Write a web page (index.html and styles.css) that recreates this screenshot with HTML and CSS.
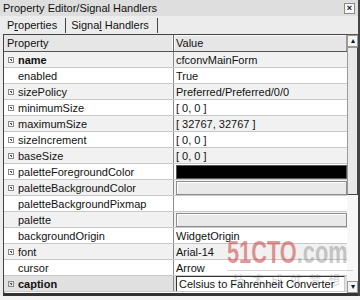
FILE: index.html
```html
<!DOCTYPE html>
<html>
<head>
<meta charset="utf-8">
<link rel="stylesheet" href="styles.css">
</head>
<body>
<div class="window">
  <div class="titlebar">
    <span class="title">Property Editor/Signal Handlers</span>
    <span class="close">×</span>
  </div>
  <div class="tabs">
    <span class="tab">P<u>r</u>operties</span>
    <span class="tab">Signa<u>l</u> Handlers</span>
  </div>
  <div class="body">
    <div class="table">
      <div class="row head"><div class="c1">Property</div><div class="c2">Value</div></div>
      <div class="row alt"><div class="c1"><i class="exp"></i><b>name</b></div><div class="c2">cfconvMainForm</div></div>
      <div class="row"><div class="c1"><i class="noexp"></i>enabled</div><div class="c2">True</div></div>
      <div class="row alt"><div class="c1"><i class="exp"></i>sizePolicy</div><div class="c2">Preferred/Preferred/0/0</div></div>
      <div class="row"><div class="c1"><i class="exp"></i>minimumSize</div><div class="c2">[ 0, 0 ]</div></div>
      <div class="row alt"><div class="c1"><i class="exp"></i>maximumSize</div><div class="c2">[ 32767, 32767 ]</div></div>
      <div class="row"><div class="c1"><i class="exp"></i>sizeIncrement</div><div class="c2">[ 0, 0 ]</div></div>
      <div class="row alt"><div class="c1"><i class="exp"></i>baseSize</div><div class="c2">[ 0, 0 ]</div></div>
      <div class="row"><div class="c1"><i class="exp"></i>paletteForegroundColor</div><div class="c2"><span class="swatch black"></span></div></div>
      <div class="row alt"><div class="c1"><i class="exp"></i>paletteBackgroundColor</div><div class="c2"><span class="swatch"></span></div></div>
      <div class="row"><div class="c1"><i class="noexp"></i>paletteBackgroundPixmap</div><div class="c2"></div></div>
      <div class="row alt"><div class="c1"><i class="noexp"></i>palette</div><div class="c2"><span class="swatch"></span></div></div>
      <div class="row"><div class="c1"><i class="noexp"></i>backgroundOrigin</div><div class="c2">WidgetOrigin</div></div>
      <div class="row alt"><div class="c1"><i class="exp"></i>font</div><div class="c2">Arial-14</div></div>
      <div class="row"><div class="c1"><i class="noexp"></i>cursor</div><div class="c2">Arrow</div></div>
      <div class="row sel"><div class="c1"><i class="exp"></i><b>caption</b></div><div class="c2"><span class="edit">Celsius to Fahrenheit Converter</span></div></div>
    </div>
    <div class="scrollbar">
      <div class="arrow">▴</div>
      <div class="thumb"></div>
      <div class="track"></div>
      <div class="arrow">▾</div>
    </div>
  </div>
  <div class="watermark">
    <div class="wm1"><span class="red">51CTO</span>.com</div>
    <div class="wm2">技术成就梦想</div>
  </div>
</div>
</body>
</html>
```
FILE: styles.css
```css
* { box-sizing: border-box; }
html, body { margin: 0; padding: 0; }
body {
  width: 360px;
  height: 300px;
  overflow: hidden;
  background: #f4f4f4;
  font-family: "Liberation Sans", Arial, sans-serif;
  font-size: 11px;
  color: #111;
}
.window {
  position: relative;
  width: 360px;
  height: 296px;
  overflow: hidden;
  background: #ececec;
  border-right: 2px solid #444;
}
.titlebar {
  height: 16px;
  display: flex;
  align-items: center;
  justify-content: space-between;
  padding: 0 3px 0 3px;
  background: #dedede;
}
.title { font-size: 11px; line-height: 16px; }
.close {
  width: 11px;
  height: 11px;
  border: 1px solid #8a8a8a;
  background: #f7f7f7;
  font-size: 9px;
  line-height: 8px;
  text-align: center;
  font-weight: bold;
}
.tabs {
  height: 18px;
  display: flex;
  align-items: center;
  padding-left: 3px;
  background: #ececec;
}
.tab {
  padding: 0 8px 0 4px;
  border-right: 1px solid #444;
  line-height: 15px;
}
.tab + .tab { padding-left: 5px; padding-right: 8px; }
.tab u { text-decoration-thickness: 1px; text-underline-offset: 1px; }
.body {
  display: flex;
  height: 262px;
  padding-left: 3px;
}
.table {
  width: 344px;
  border-left: 1px solid #444;
  border-top: 1px solid #444;
  border-bottom: 3px solid #333;
  background: #fff;
  box-shadow: inset 1px 0 0 #aaa;
}
.row {
  display: flex;
  height: 16px;
  border-bottom: 1px solid #c8c8c8;
  background: #fff;
}
.row.alt { background: #f1f1f1; }
.row.sel { background: #e0e0e0; }
.row.head {
  height: 17px;
  background: #e6e6e6;
  border-bottom: 1px solid #555;
}
.c1 {
  width: 170px;
  display: flex;
  align-items: center;
  padding-left: 2px;
  border-right: 1px solid #8a8a8a;
  white-space: nowrap;
  overflow: hidden;
}
.c2 {
  flex: 1;
  display: flex;
  align-items: center;
  padding-left: 2px;
  white-space: nowrap;
  overflow: hidden;
}
.head .c1 { padding-left: 3px; border-right: 1px solid #666; box-shadow: inset -1px 0 0 #fafafa; }
.head .c2 { padding-left: 2px; box-shadow: inset 1px 1px 0 #fafafa; border-right: 1px solid #999; }
.exp {
  width: 6px;
  height: 6px;
  margin: 0 4px 0 2px;
  border: 1px solid #8a8a8a;
  background:
    linear-gradient(#555, #555) center / 2px 1px no-repeat,
    linear-gradient(#555, #555) center / 1px 2px no-repeat;
  flex: none;
}
.noexp { width: 12px; flex: none; }
b { font-weight: bold; }
.swatch {
  display: block;
  width: 171px;
  height: 14px;
  border: 1px solid #8c8c8c;
  background: #e9e9e9;
  box-shadow: inset 1px 1px 0 #fff;
}
.swatch.black { background: #000; border-color: #555; box-shadow: none; }
.edit {
  display: block;
  width: 169px;
  height: 16px;
  padding-left: 2px;
  line-height: 14px;
  background: #fff;
  border: 1px solid #333;
  border-right-color: #ccc;
  border-bottom-color: #ccc;
}
.scrollbar {
  width: 11px;
  display: flex;
  flex-direction: column;
  background: #f0f0f0;
  border-top: 1px solid #555;
  border-bottom: 3px solid #333;
}
.arrow {
  height: 12px;
  border: 1px solid #999;
  background: #f4f4f4;
  font-size: 8px;
  line-height: 10px;
  text-align: center;
}
.thumb {
  height: 148px;
  border: 1px solid #999;
  border-right-color: #444;
  border-bottom-color: #444;
  background: #e9e9e9;
}
.track { flex: 1; background: #f7f7f7; }
.watermark {
  position: absolute;
  left: 227px;
  top: 236px;
  width: 126px;
  pointer-events: none;
}
.wm1 {
  font-family: "Liberation Sans", Arial, sans-serif;
  font-size: 32px;
  font-weight: bold;
  color: rgba(120, 120, 120, 0.4);
  line-height: 32px;
  white-space: nowrap;
  transform: scaleX(0.68);
  transform-origin: left center;
}
.wm1 .red { color: rgba(200, 50, 50, 0.5); }
.wm2 {
  font-family: "Noto Sans CJK SC", sans-serif;
  font-size: 12px;
  letter-spacing: 7px;
  white-space: nowrap;
  color: rgba(90, 90, 90, 0.3);
  padding-left: 6px;
  line-height: 18px;
  margin-top: 2px;
  border-top: 1px solid rgba(120, 120, 120, 0.3);
}
```
